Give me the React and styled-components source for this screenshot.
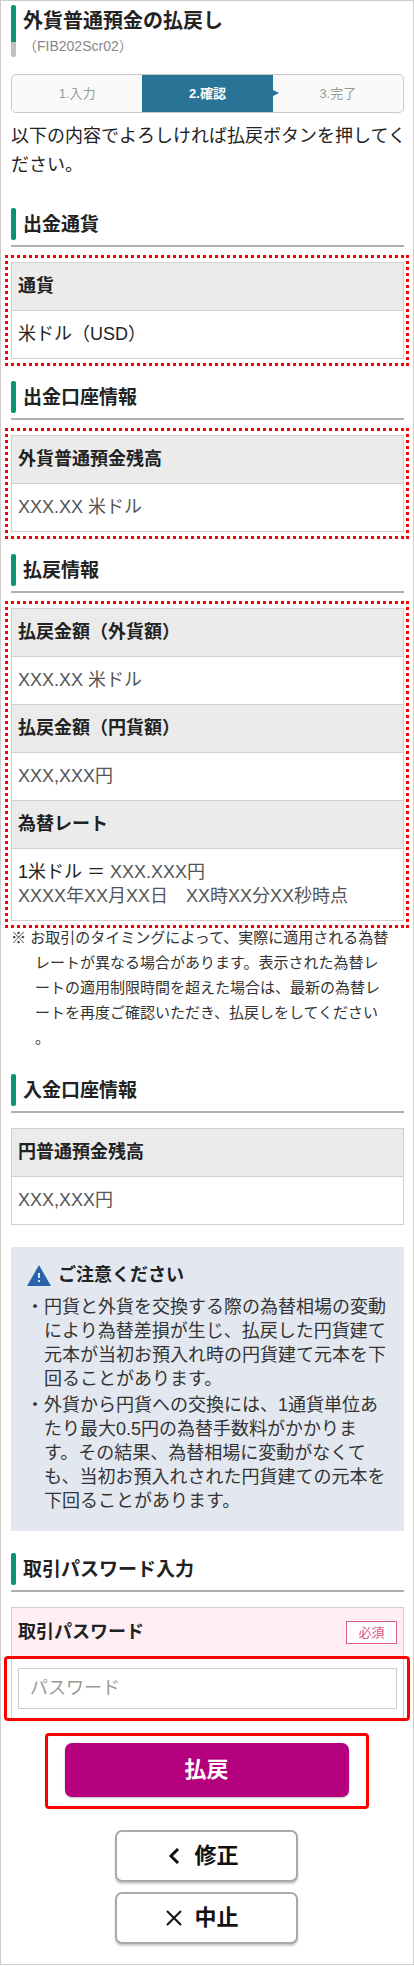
import React from 'react';
import styled, { createGlobalStyle } from 'styled-components';

const GlobalStyle = createGlobalStyle`
  * {
    box-sizing: border-box;
  }
  body {
    margin: 0;
    background: #fff;
    color: #222;
    font-family: 'Liberation Sans', 'Noto Sans CJK JP', sans-serif;
    font-size: 18px;
    line-height: 24px;
  }
  button,
  input {
    font-family: inherit;
  }
`;

const Page = styled.main`
  border: 1px solid #ccc;
  padding: 4px 9px 20px 10px;
`;

const TitleBlock = styled.header`
  display: flex;
  gap: 7px;
`;

const TitleBar = styled.span`
  width: 5px;
  border-radius: 2px;
  background: linear-gradient(#0b9474 37px, #c4c0c0 37px);
`;

const Title = styled.h1`
  margin: 0;
  font-size: 20px;
  line-height: 33px;
`;

const ScreenCode = styled.p`
  margin: 0 0 3px;
  color: #888;
  font-size: 14px;
  line-height: 16px;
`;

const Steps = styled.ol`
  display: flex;
  margin: 17px 0 9px;
  padding: 0;
  border: 1px solid #c8c8c8;
  border-radius: 5px;
  background: #fafafa;
  list-style: none;
`;

const Step = styled.li`
  position: relative;
  flex: 1;
  color: ${props => props.$active ? '#fff' : '#999'};
  background: ${props => props.$active ? '#287396' : 'none'};
  font-size: 13px;
  font-weight: ${props => props.$active ? 'bold' : 'normal'};
  line-height: 37px;
  text-align: center;

  &::after {
    content: '';
    display: ${props => props.$active ? 'block' : 'none'};
    position: absolute;
    top: 15px;
    left: 100%;
    border: solid transparent;
    border-width: 3px 0 3px 6px;
    border-left-color: #287396;
  }
`;

const Lead = styled.p`
  margin: 0 -4px 28px 0;
  line-height: 29px;
`;

const Section = styled.section`
  margin-top: 22px;
`;

const SectionTitle = styled.h2`
  display: flex;
  gap: 7px;
  margin: 0 0 15px;
  padding-bottom: 3px;
  border-bottom: 2px solid #b0b0b0;
  font-size: 19px;
  line-height: 34px;

  &::before {
    content: '';
    width: 5px;
    height: 32px;
    border-radius: 2px;
    background: #0b9474;
  }
`;

const dots = direction => `repeating-linear-gradient(${direction}, #f00 0 3px, transparent 3px 6px)`;

const Marked = styled.div`
  position: relative;

  &::after {
    content: '';
    position: absolute;
    inset: -7px -5px -7px -6px;
    background:
      ${dots('to right')} top / 100% 3px no-repeat,
      ${dots('to right')} bottom / 100% 3px no-repeat,
      ${dots('to bottom')} left / 3px 100% no-repeat,
      ${dots('to bottom')} right / 3px 100% no-repeat;
    pointer-events: none;
  }
`;

const Table = styled.table`
  width: 100%;
  border: 1px solid #d0d0d0;
  border-spacing: 0;

  th,
  td {
    padding: 11px 6px 12px;
    text-align: left;
  }
  th {
    background: #ebebeb;
  }
  td {
    color: #555;
  }
  tr + tr > * {
    border-top: 1px solid #d0d0d0;
  }
`;

const Strong = styled.span`
  color: #222;
`;

const Note = styled.p`
  margin: 4px 11px 24px 0;
  padding-left: 24px;
  text-indent: -24px;
  color: #333;
  font-size: 15px;
  line-height: 25px;
  line-break: anywhere;
`;

const Caution = styled.aside`
  margin-top: 22px;
  padding: 14px 16px 18px;
  background: #e3e8f0;
`;

const CautionTitle = styled.h3`
  display: flex;
  align-items: center;
  gap: 7px;
  margin: 0 0 6px;
  font-size: 18px;
  line-height: 28px;
`;

const CautionList = styled.ul`
  display: grid;
  gap: 2px;
  margin: 0;
  padding: 0 0 0 17px;
  color: #333;
  list-style: none;
  text-indent: -18px;
`;

const Field = styled.div`
  border: 1px solid #d0d0d0;
  border-bottom: 0;
`;

const FieldHead = styled.div`
  display: flex;
  align-items: center;
  justify-content: space-between;
  padding: 12px 6px;
  background: #ffeff4;
`;

const Label = styled.label`
  font-weight: bold;
`;

const Required = styled.span`
  width: 51px;
  border: 1px solid #dd5c8c;
  background: #fff;
  color: #dd4f85;
  font-size: 13px;
  line-height: 21px;
  text-align: center;
`;

const FieldBody = styled.div`
  position: relative;
  padding: 12px 6px 11px;

  &::after {
    content: '';
    position: absolute;
    inset: 0 -7px -1px -8px;
    border: 3px solid #f00;
    border-radius: 4px;
    pointer-events: none;
  }
`;

const Input = styled.input`
  display: block;
  width: 100%;
  height: 41px;
  padding: 0 11px;
  border: 1px solid #ccc;
  font-size: 18px;

  &::placeholder {
    color: #999;
  }
`;

const Actions = styled.div`
  display: flex;
  flex-direction: column;
  align-items: center;
  gap: 10px;
  margin-top: 13px;
  padding-right: 2px;
`;

const SubmitFrame = styled.div`
  width: 100%;
  max-width: 324px;
  margin-bottom: 11px;
  padding: 7px 17px 9px;
  border: 3px solid #f00;
  border-radius: 4px;
`;

const Button = styled.button`
  display: flex;
  align-items: center;
  justify-content: center;
  gap: 12px;
  border-radius: 7px;
  font-size: 22px;
  font-weight: bold;
  line-height: 32px;
`;

const SubmitButton = styled(Button)`
  width: 100%;
  height: 54px;
  border: 0;
  background: #b5007e;
  box-shadow: 0 1px 2px #bbb;
  color: #fff;
`;

const PlainButton = styled(Button)`
  width: 47%;
  height: 52px;
  padding: 0 8px 0 0;
  border: 2px solid #a6aaae;
  background: #fff;
  box-shadow: 0 2px 2px #ccc;
  color: #111;
`;

const WarningIcon = () => (
  <svg width="24" height="21" viewBox="0 0 24 21" aria-hidden="true">
    <path d="M12 0 24 21H0Z" fill="#2864ac" />
    <path d="M11 8h2v5h-2zM11 15h2v2h-2z" fill="#e3e8f0" />
  </svg>
);

const BackIcon = () => (
  <svg width="16" height="16" viewBox="0 0 16 16" fill="none" stroke="#111" strokeWidth="3" aria-hidden="true">
    <path d="M12 1 5 8l7 7" />
  </svg>
);

const CloseIcon = () => (
  <svg width="16" height="16" viewBox="0 0 16 16" fill="none" stroke="#111" strokeWidth="2" aria-hidden="true">
    <path d="m1 1 14 14M15 1 1 15" />
  </svg>
);

function DetailTable({ rows }) {
  return (
    <Table>
      <tbody>
        {rows.map(([label, value]) => (
          <React.Fragment key={label}>
            <tr><th>{label}</th></tr>
            <tr><td>{value}</td></tr>
          </React.Fragment>
        ))}
      </tbody>
    </Table>
  );
}

const steps = ['1.入力', '2.確認', '3.完了'];

const rate = (
  <>
    <Strong>1米ドル ＝</Strong> XXX.XXX円<br />
    XXXX年XX月XX日　XX時XX分XX秒時点
  </>
);

export default function App() {
  return (
    <Page lang="ja">
      <GlobalStyle />
      <TitleBlock>
        <TitleBar />
        <div>
          <Title>外貨普通預金の払戻し</Title>
          <ScreenCode>（FIB202Scr02）</ScreenCode>
        </div>
      </TitleBlock>

      <Steps>
        {steps.map((step, index) => (
          <Step key={step} $active={index === 1}>{step}</Step>
        ))}
      </Steps>
      <Lead>以下の内容でよろしければ払戻ボタンを押してください。</Lead>

      <Section>
        <SectionTitle>出金通貨</SectionTitle>
        <Marked>
          <DetailTable rows={[['通貨', <Strong>米ドル（USD）</Strong>]]} />
        </Marked>
      </Section>

      <Section>
        <SectionTitle>出金口座情報</SectionTitle>
        <Marked>
          <DetailTable rows={[['外貨普通預金残高', 'XXX.XX 米ドル']]} />
        </Marked>
      </Section>

      <Section>
        <SectionTitle>払戻情報</SectionTitle>
        <Marked>
          <DetailTable
            rows={[
              ['払戻金額（外貨額）', 'XXX.XX 米ドル'],
              ['払戻金額（円貨額）', 'XXX,XXX円'],
              ['為替レート', rate]
            ]}
          />
        </Marked>
        <Note>
          ※ お取引のタイミングによって、実際に適用される為替レートが異なる場合があります。表示された為替レートの適用制限時間を超えた場合は、最新の為替レートを再度ご確認いただき、払戻しをしてください。
        </Note>
      </Section>

      <Section>
        <SectionTitle>入金口座情報</SectionTitle>
        <DetailTable rows={[['円普通預金残高', 'XXX,XXX円']]} />
      </Section>

      <Caution>
        <CautionTitle><WarningIcon />ご注意ください</CautionTitle>
        <CautionList>
          <li>・円貨と外貨を交換する際の為替相場の変動により為替差損が生じ、払戻した円貨建て元本が当初お預入れ時の円貨建て元本を下回ることがあります。</li>
          <li>・外貨から円貨への交換には、1通貨単位あたり最大0.5円の為替手数料がかかります。その結果、為替相場に変動がなくても、当初お預入れされた円貨建ての元本を下回ることがあります。</li>
        </CautionList>
      </Caution>

      <form onSubmit={e => e.preventDefault()}>
        <Section>
          <SectionTitle>取引パスワード入力</SectionTitle>
          <Field>
            <FieldHead>
              <Label htmlFor="password">取引パスワード</Label>
              <Required>必須</Required>
            </FieldHead>
            <FieldBody>
              <Input id="password" type="password" placeholder="パスワード" />
            </FieldBody>
          </Field>
        </Section>

        <Actions>
          <SubmitFrame>
            <SubmitButton type="submit">払戻</SubmitButton>
          </SubmitFrame>
          <PlainButton type="button"><BackIcon />修正</PlainButton>
          <PlainButton type="button"><CloseIcon />中止</PlainButton>
        </Actions>
      </form>
    </Page>
  );
}
